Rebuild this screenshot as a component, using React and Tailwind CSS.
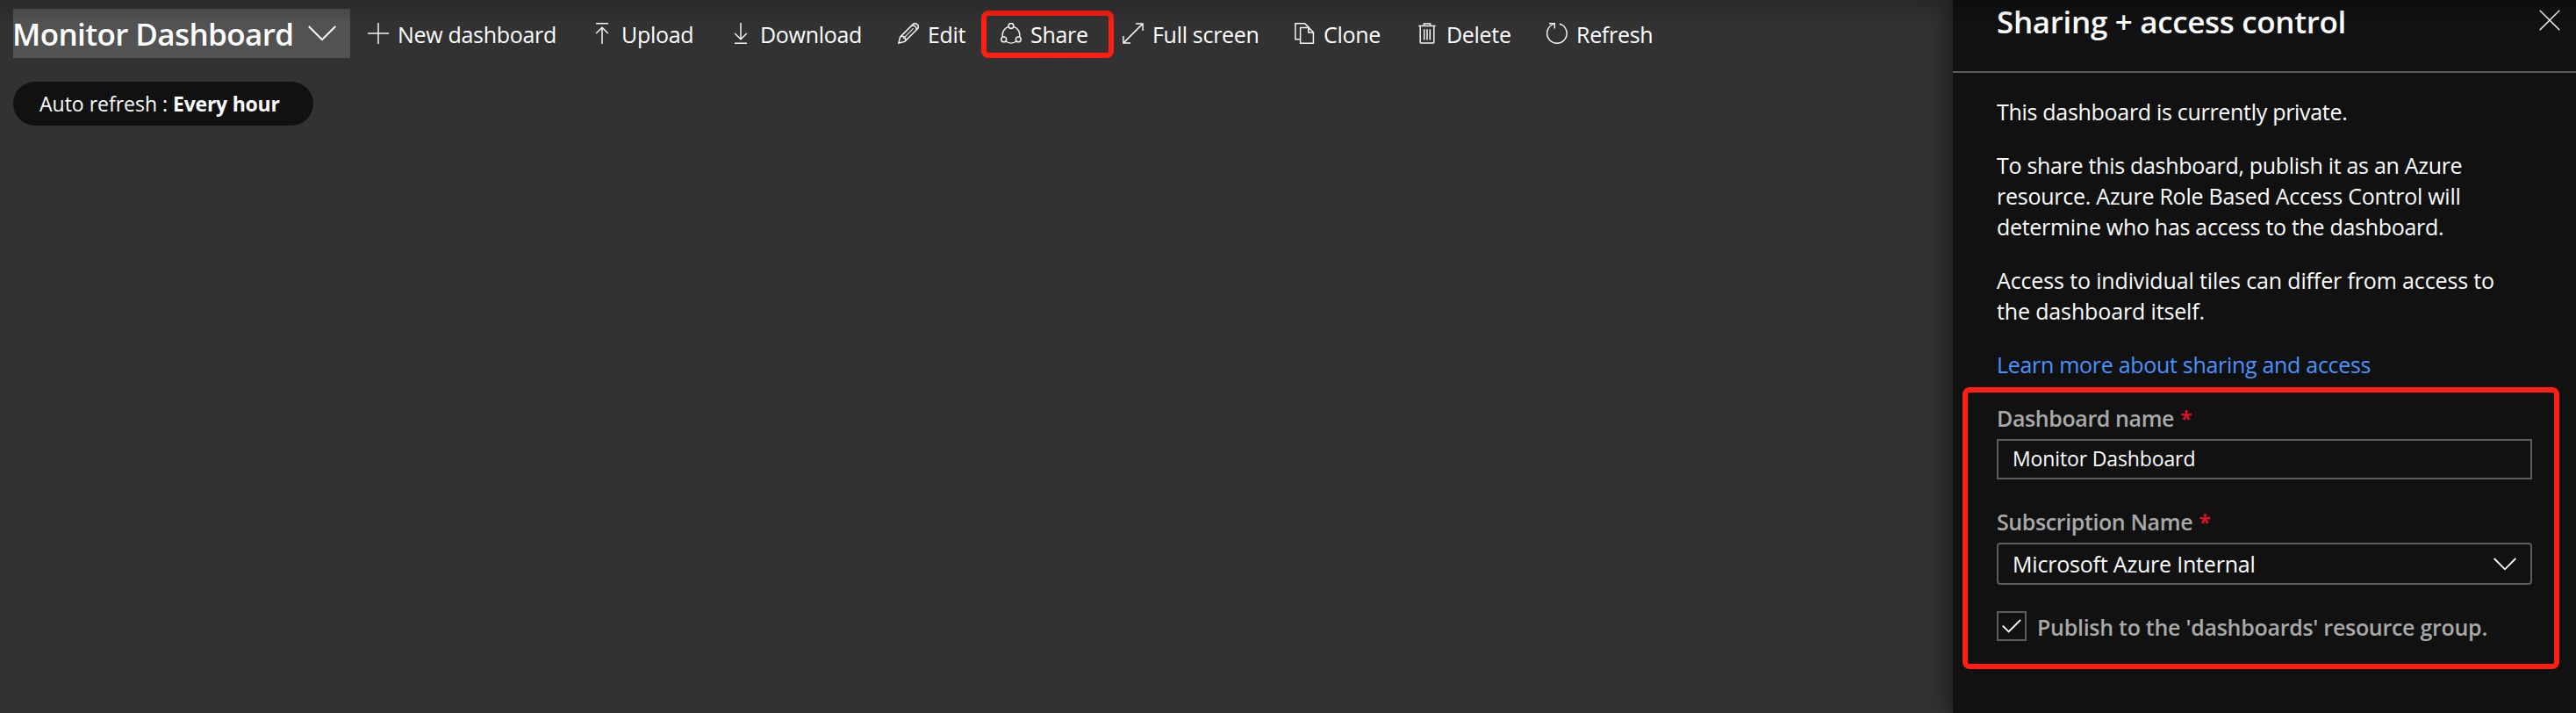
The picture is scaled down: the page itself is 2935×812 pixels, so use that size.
import React from 'react';

function Icon({ children, className = 'h-6 w-6' }) {
  return (
    <svg viewBox="0 0 24 24" className={`${className} block shrink-0`} fill="none" stroke="#f4f4f4" strokeWidth="1.5">
      {children}
    </svg>
  );
}

const icons = {
  plus: <path d="M0 12H24M12 0V24" />,
  upload: <path d="M5 .75H19M12 24V5.5M5.2 12L12 5.2L18.8 12" />,
  download: <path d="M5 23.25H19M12 0V18.5M5.2 12L12 18.8L18.8 12" />,
  edit: (
    <>
      <path d="M.9 23.1L2.6 16.2L17.2 1.6A3.7 3.7 0 0 1 22.4 6.8L7.8 21.4ZM2.6 16.2A3.7 3.7 0 0 1 7.8 21.4M14.9 3.9A3.7 3.7 0 0 1 20.1 9.1" />
      <path d="M5.9 18.1L17.6 6.4" strokeWidth="1.1" />
    </>
  ),
  share: (
    <>
      <circle cx="12" cy="3.6" r="2.9" />
      <circle cx="3.7" cy="18.9" r="2.9" />
      <circle cx="20.3" cy="18.9" r="2.9" />
      <path d="M9.2 4.4A10.1 10.1 0 0 0 2.4 16.2M14.8 4.4A10.1 10.1 0 0 1 21.6 16.2M5.9 21A10.3 10.3 0 0 0 18.1 21" />
    </>
  ),
  full: <path d="M.9 23.1L23.1 .9M15 .9H23.1V9M.9 15V23.1H9" />,
  clone: (
    <>
      <path d="M7.6 18.8H1.9V.8H12.6L17.4 5.4" />
      <path d="M7.6 5.6H17.2L22.4 10.8V23.2H7.6ZM16.8 5.8V11H22.2" />
    </>
  ),
  trash: (
    <>
      <path d="M2.3 3.6H21.7M8.4 3.4V.9H15.6V3.4M4.2 3.8V22A1.1 1.1 0 0 0 5.3 23.1H18.7A1.1 1.1 0 0 0 19.8 22V3.8" />
      <path d="M8.7 7.2V19.6M12 7.2V19.6M15.3 7.2V19.6" />
    </>
  ),
  refresh: (
    <>
      <path d="M15 1.2A11.25 11.25 0 1 1 8.2 1.4" />
      <path d="M3 .8H9.3V6.6" />
    </>
  ),
};

const commands = [
  { icon: 'plus', label: 'New dashboard', width: 'w-[255px]' },
  { icon: 'upload', label: 'Upload', width: 'w-[158px]' },
  { icon: 'download', label: 'Download', width: 'w-[191px]' },
  { icon: 'edit', label: 'Edit', width: 'w-[117px]' },
  { icon: 'share', label: 'Share', width: 'w-[139px]', marked: true },
  { icon: 'full', label: 'Full screen', width: 'w-[195px]' },
  { icon: 'clone', label: 'Clone', width: 'w-[140px]' },
  { icon: 'trash', label: 'Delete', width: 'w-[148px]' },
  { icon: 'refresh', label: 'Refresh', width: 'w-[140px]' },
];

function Toolbar() {
  return (
    <div className="flex h-14 items-center">
      <button className="flex h-14 w-[384px] items-center bg-[#525252]">
        <span className="-ml-px pt-[2px] text-[35px] leading-[54px] font-semibold tracking-[-0.6px]">Monitor Dashboard</span>
        <svg viewBox="0 0 32 18" className="mr-4 ml-auto h-[18px] w-8 shrink-0" fill="none" stroke="#fff" strokeWidth="2">
          <path d="M.8 1L16 16.2L31.2 1" />
        </svg>
      </button>
      <div className="ml-5 flex items-center">
        {commands.map((c) => (
          <button key={c.label} className={`relative flex items-center gap-[10px] ${c.width}`}>
            <Icon>{icons[c.icon]}</Icon>
            <span className="pt-px text-[25px] leading-9 tracking-[-0.3px] whitespace-nowrap">{c.label}</span>
            {c.marked && (
              <span className="absolute -top-[8px] -left-[22px] h-[54px] w-[151px] rounded-lg border-[6px] border-[#ff1e12]" />
            )}
          </button>
        ))}
      </div>
    </div>
  );
}

function Label({ children }) {
  return (
    <div className="flex gap-[7px] text-[25px] leading-[35px] font-semibold tracking-[-0.4px] text-[#a9a9a9]">
      {children}
      <span className="text-[#e81123]">*</span>
    </div>
  );
}

function SharePanel() {
  return (
    <aside className="flex w-[710px] shrink-0 flex-col bg-[#111111] shadow-[0_0_28px_rgba(0,0,0,0.65)]">
      <header className="flex h-[83px] justify-between border-b-2 border-[#5c5c5c] pr-[18px] pl-[50px]">
        <h2 className="text-[35px] leading-[49px] font-semibold tracking-[-0.33px]">Sharing + access control</h2>
        <Icon className="mt-[11px] h-6 w-6">
          <path d="M.7 .7L23.3 23.3M23.3 .7L.7 23.3" />
        </Icon>
      </header>
      <div className="px-[50px] pt-[27px]">
        <div className="flex flex-col gap-[26px] text-[25px] leading-[35px] tracking-[-0.25px] whitespace-nowrap">
          <p className="tracking-[-0.3px]">This dashboard is currently private.</p>
          <p>
            <span className="tracking-[-0.3px]">To share this dashboard, publish it as an Azure</span>
            <br />
            resource. Azure Role Based Access Control will
            <br />
            <span className="tracking-[-0.3px]">determine who has access to the dashboard.</span>
          </p>
          <p className="tracking-[-0.14px]">
            Access to individual tiles can differ from access to
            <br />
            the dashboard itself.
          </p>
          <a className="tracking-[-0.3px] text-[#4894fe]">Learn more about sharing and access</a>
        </div>
        <div className="relative mt-[26px]">
          <Label>Dashboard name</Label>
          <div className="mt-[6px] flex h-[46px] items-center border-2 border-[#5c5c5c] pb-[2px] pl-4 text-[23px] tracking-[-0.13px]">
            Monitor Dashboard
          </div>
          <div className="mt-[31px]">
            <Label>Subscription Name</Label>
          </div>
          <div className="mt-[6px] flex h-12 items-center justify-between rounded-[4px] border-2 border-[#5c5c5c] pr-4 pl-4 text-[25px] tracking-[-0.2px]">
            <span className="pt-px">Microsoft Azure Internal</span>
            <svg viewBox="0 0 26 15" className="h-[15px] w-[26px]" fill="none" stroke="#fff" strokeWidth="1.8">
              <path d="M.7 1L13 13.3L25.3 1" />
            </svg>
          </div>
          <div className="mt-[30px] flex items-center">
            <span className="flex h-[34px] w-[34px] items-center justify-center border-2 border-[#5c5c5c]">
              <svg viewBox="0 0 22 16" className="h-4 w-[22px]" fill="none" stroke="#fff" strokeWidth="1.8">
                <path d="M.8 7.6L7.6 14.4L21.2 .8" />
              </svg>
            </span>
            <span className="ml-3 pt-[2px] text-[25px] leading-[32px] font-semibold tracking-[-0.28px] text-[#a9a9a9]">
              Publish to the 'dashboards' resource group.
            </span>
          </div>
          <span className="absolute -top-[18px] -left-[39px] h-[321px] w-[680px] rounded-lg border-[6px] border-[#ff1e12]" />
        </div>
      </div>
    </aside>
  );
}

export default function App() {
  return (
    <div className="relative flex h-[812px] w-[2935px] overflow-hidden bg-[#323232] font-['Open_Sans','Noto_Sans',sans-serif] text-white">
      <main className="flex-1 pt-[10px] pl-[15px]">
        <Toolbar />
        <div className="mt-[27px] flex h-[50px] w-[342px] items-center gap-[7px] rounded-full bg-[#111111] pt-px pl-[30px] text-[23px]">
          <span>Auto refresh :</span>
          <span className="-ml-px font-bold tracking-[-0.25px]">Every hour</span>
        </div>
      </main>
      <SharePanel />
      <div className="pointer-events-none absolute inset-x-0 top-0 h-[26px] bg-linear-to-b from-black/20 to-transparent" />
    </div>
  );
}
